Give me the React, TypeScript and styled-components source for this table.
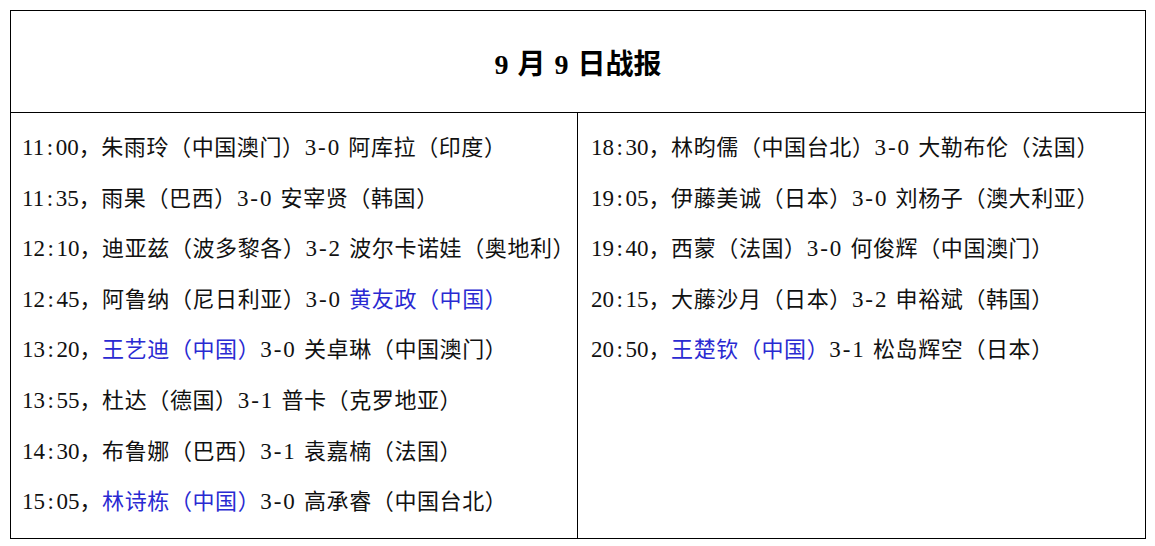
import React from 'react'
import styled, {createGlobalStyle} from 'styled-components'

const GlobalStyle = createGlobalStyle`
  html, body {
    margin: 0;
    padding: 0;
    background: #fff;
  }
  body {
    font-family: "Liberation Serif", "Noto Sans CJK SC", serif;
    color: #111;
  }
`

const Page = styled.div`
  padding: 10px 9px 10px 10px;
`

const Board = styled.div`
  border: 1px solid #000;
  display: flex;
  flex-direction: column;
`

const Title = styled.h1`
  margin: 0;
  height: 101px;
  border-bottom: 1px solid #000;
  display: flex;
  align-items: center;
  justify-content: center;
  font-family: "Liberation Serif", "Noto Sans CJK SC", serif;
  font-size: 28px;
  font-weight: 700;
  word-spacing: 2px;
  color: #000;
`

const Columns = styled.div`
  display: grid;
  grid-template-columns: 566px 1fr;
`

const Column = styled.ul<{$divider?: boolean}>`
  list-style: none;
  margin: 0;
  padding: 10px 0 10px ${p => (p.$divider ? 13 : 11)}px;
  border-left: ${p => (p.$divider ? '1px solid #000' : 'none')};
  min-height: 405px;
`

const Row = styled.li`
  height: 50.6px;
  line-height: 50.6px;
  font-size: 22px;
  letter-spacing: 0.6px;
  white-space: nowrap;
`

const Num = styled.span`
  font-family: "Liberation Serif", serif;
  font-size: 23px;
  letter-spacing: 0;
`

const Sep = styled.span`
  display: inline-block;
  width: 0.5em;
  text-align: center;
`

const Score = styled(Num)`
  margin-right: 0.4em;
`

const Player = styled.span<{$cn?: boolean}>`
  color: ${p => (p.$cn ? '#2a2ad2' : 'inherit')};
`

type Match = {
  time: string
  a: string
  score: string
  b: string
  aCn?: boolean
  bCn?: boolean
}

const left: Match[] = [
  {time: '11:00', a: '朱雨玲（中国澳门）', score: '3-0', b: '阿库拉（印度）'},
  {time: '11:35', a: '雨果（巴西）', score: '3-0', b: '安宰贤（韩国）'},
  {time: '12:10', a: '迪亚兹（波多黎各）', score: '3-2', b: '波尔卡诺娃（奥地利）'},
  {time: '12:45', a: '阿鲁纳（尼日利亚）', score: '3-0', b: '黄友政（中国）', bCn: true},
  {time: '13:20', a: '王艺迪（中国）', score: '3-0', b: '关卓琳（中国澳门）', aCn: true},
  {time: '13:55', a: '杜达（德国）', score: '3-1', b: '普卡（克罗地亚）'},
  {time: '14:30', a: '布鲁娜（巴西）', score: '3-1', b: '袁嘉楠（法国）'},
  {time: '15:05', a: '林诗栋（中国）', score: '3-0', b: '高承睿（中国台北）', aCn: true},
]

const right: Match[] = [
  {time: '18:30', a: '林昀儒（中国台北）', score: '3-0', b: '大勒布伦（法国）'},
  {time: '19:05', a: '伊藤美诚（日本）', score: '3-0', b: '刘杨子（澳大利亚）'},
  {time: '19:40', a: '西蒙（法国）', score: '3-0', b: '何俊辉（中国澳门）'},
  {time: '20:15', a: '大藤沙月（日本）', score: '3-2', b: '申裕斌（韩国）'},
  {time: '20:50', a: '王楚钦（中国）', score: '3-1', b: '松岛辉空（日本）', aCn: true},
]

// digits are half-width in the source font, so give ':' and '-' the same cell
function split(text: string, mark: string) {
  const [x, y] = text.split(mark)
  return <>{x}<Sep>{mark}</Sep>{y}</>
}

function MatchRow({m}: {m: Match}) {
  return (
    <Row>
      <Num>{split(m.time, ':')}</Num>，
      <Player $cn={m.aCn}>{m.a}</Player>
      <Score>{split(m.score, '-')}</Score>
      <Player $cn={m.bCn}>{m.b}</Player>
    </Row>
  )
}

export default function App() {
  return (
    <>
      <GlobalStyle/>
      <Page>
        <Board>
          <Title>9 月 9 日战报</Title>
          <Columns>
            <Column>
              {left.map(m => <MatchRow key={m.time} m={m}/>)}
            </Column>
            <Column $divider>
              {right.map(m => <MatchRow key={m.time} m={m}/>)}
            </Column>
          </Columns>
        </Board>
      </Page>
    </>
  )
}
